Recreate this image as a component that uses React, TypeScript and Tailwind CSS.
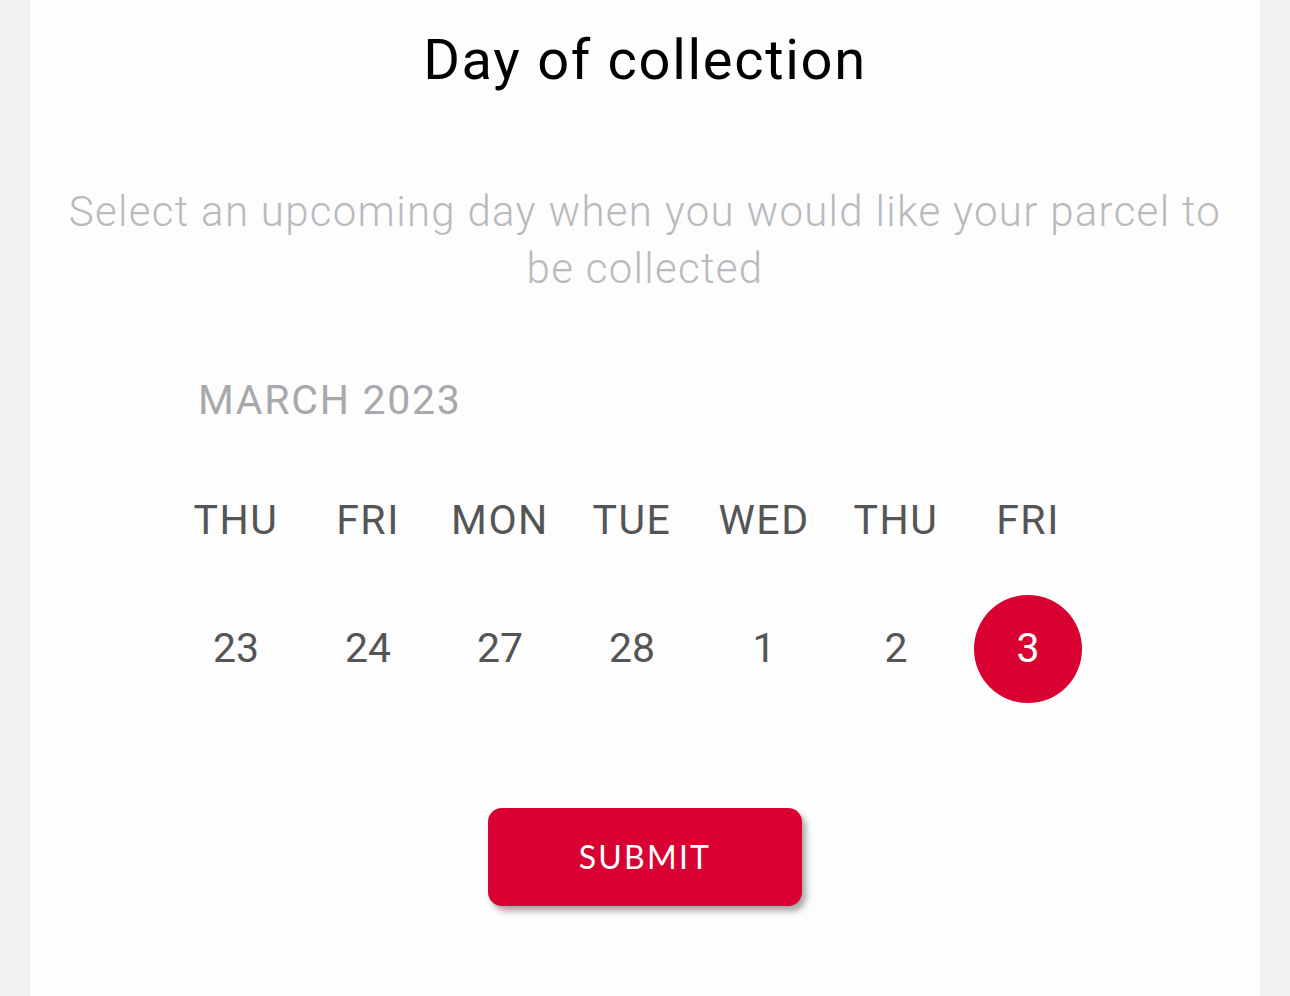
const days = [
  { name: 'THU', date: '23' },
  { name: 'FRI', date: '24' },
  { name: 'MON', date: '27' },
  { name: 'TUE', date: '28' },
  { name: 'WED', date: '1' },
  { name: 'THU', date: '2' },
  { name: 'FRI', date: '3', selected: true },
];

export default function App() {
  return (
    <div className="min-h-[996px] bg-[#f1f1f1] px-[30px] font-['Roboto',sans-serif]">
      <div className="min-h-[996px] bg-[#fdfdfd] flex flex-col">
        {/* Header */}
        <h1 className="text-center text-[56px] leading-[66px] pt-[27px] text-black tracking-[1.7px]">
          Day of collection
        </h1>
        <p className="mt-[90px] px-[30px] text-center text-[42px] leading-[57px] font-light text-[#b9babd] tracking-[1.3px]">
          Select an upcoming day when you would like your parcel to be collected
        </p>

        {/* Calendar */}
        <div className="mt-[79px] pl-[140px]">
          <div className="pl-[28px] text-[41px] leading-[48px] text-[#a7a9ad] tracking-[1.7px]">
            MARCH 2023
          </div>
          <div className="mt-[72px] grid grid-cols-[repeat(7,132px)] text-[#555555] text-[41px]">
            {days.map((d, i) => (
              <div key={i} className="flex flex-col items-center">
                <div className="leading-[48px] tracking-[1.5px]">{d.name}</div>
                <div
                  className={`mt-[51px] w-[108px] h-[108px] rounded-full flex items-center justify-center ${
                    d.selected ? 'bg-[#d90032] text-white' : ''
                  }`}
                >
                  {d.date}
                </div>
              </div>
            ))}
          </div>
        </div>

        {/* Submit */}
        <div className="mt-[105px] flex justify-center">
          <button className="w-[314px] h-[98px] rounded-[14px] bg-[#d90032] text-white text-[32px] tracking-[2.2px] font-['Lato',sans-serif] shadow-[4px_5px_6px_rgba(0,0,0,0.35)]">
            SUBMIT
          </button>
        </div>
      </div>
    </div>
  );
}
